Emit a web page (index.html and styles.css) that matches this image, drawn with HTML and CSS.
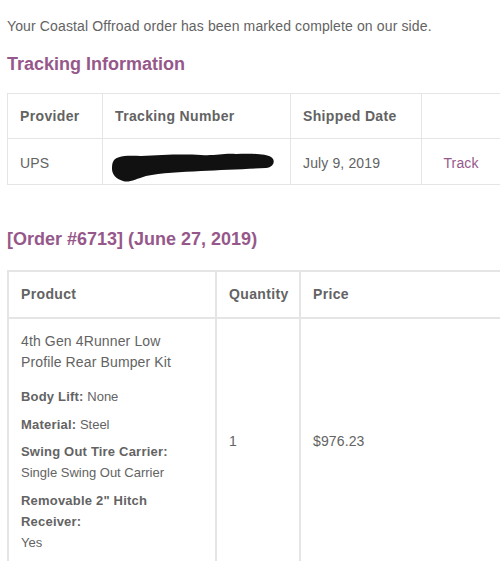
FILE: index.html
```html
<!DOCTYPE html>
<html>
<head>
<meta charset="utf-8">
<link rel="stylesheet" href="styles.css">
</head>
<body>
<div class="email">
  <p class="intro">Your Coastal Offroad order has been marked complete on our side.</p>

  <h2 class="heading">Tracking Information</h2>
  <table class="tracking">
    <thead>
      <tr>
        <th class="tc-provider">Provider</th>
        <th class="tc-number">Tracking Number</th>
        <th class="tc-date">Shipped Date</th>
        <th class="tc-action"></th>
      </tr>
    </thead>
    <tbody>
      <tr>
        <td>UPS</td>
        <td class="redacted-cell">
          <svg class="redaction" width="166" height="38" viewBox="0 0 166 38" aria-hidden="true">
            <path d="M2,16 C4,10 14,9 30,10 C50,9 70,8 90,9 C105,10 112,7 125,8 C140,7 155,8 160,11 C165,14 163,21 155,22 C135,23 110,24 90,25 C70,26 50,27 35,30 C25,33 18,37 12,35 C5,33 1,28 1,23 C1,20 1,18 2,16 Z" fill="#111111"/>
          </svg>
        </td>
        <td>July 9, 2019</td>
        <td class="action"><a class="link" href="#">Track</a></td>
      </tr>
    </tbody>
  </table>

  <h2 class="heading order-heading">[Order #6713] (June 27, 2019)</h2>
  <table class="order">
    <thead>
      <tr>
        <th class="oc-product">Product</th>
        <th class="oc-qty">Quantity</th>
        <th class="oc-price">Price</th>
      </tr>
    </thead>
    <tbody>
      <tr>
        <td class="product">
          <div class="product-name">4th Gen 4Runner Low Profile Rear Bumper Kit</div>
          <ul class="meta">
            <li><strong>Body Lift:</strong> None</li>
            <li><strong>Material:</strong> Steel</li>
            <li><strong class="label-block">Swing Out Tire Carrier:</strong>Single Swing Out Carrier</li>
            <li><strong class="label-block">Removable 2" Hitch Receiver:</strong>Yes</li>
          </ul>
        </td>
        <td class="middle">1</td>
        <td class="middle">$976.23</td>
      </tr>
    </tbody>
  </table>
</div>
</body>
</html>
```

FILE: styles.css
```css
html, body {
  margin: 0;
  padding: 0;
  background: #ffffff;
  overflow: hidden;
}

.email {
  padding: 16px 0 0 7px;
  font-family: "Liberation Sans", Arial, sans-serif;
  font-size: 14px;
  line-height: 21px;
  letter-spacing: 0.13px;
  color: #636363;
}

.intro {
  margin: 0 0 16px;
}

.heading {
  margin: 0 0 17px;
  font-size: 18px;
  line-height: 23px;
  font-weight: bold;
  letter-spacing: 0;
  color: #96588a;
}

.order-heading {
  margin: 43px 0 19px;
}

/* tracking table */
.tracking {
  width: 494px;
  table-layout: fixed;
  border-collapse: separate;
  border-spacing: 0;
  border-top: 1px solid #e5e5e5;
  border-left: 1px solid #e5e5e5;
}

.tracking th,
.tracking td {
  box-sizing: border-box;
  padding: 12px;
  border-right: 1px solid #e5e5e5;
  border-bottom: 1px solid #e5e5e5;
  text-align: left;
  vertical-align: middle;
  white-space: nowrap;
}

.tracking th {
  line-height: 20px;
  font-weight: bold;
  letter-spacing: 0.35px;
}

.tracking td {
  padding-top: 14px;
  padding-bottom: 10px;
}

.tc-provider { width: 95px; }
.tc-number { width: 188px; }
.tc-date { width: 131px; }
.tc-action { width: 79px; }

.tracking td.action {
  text-align: center;
  padding-left: 0;
  padding-right: 0;
}

.link {
  color: #96588a;
  text-decoration: none;
}

.redaction {
  display: block;
  margin: -7px 0 -10px -4px;
}

/* order table */
.order {
  width: 520px;
  table-layout: fixed;
  border-collapse: separate;
  border-spacing: 0;
  border: 1px solid #e5e5e5;
}

.order th,
.order td {
  box-sizing: border-box;
  padding: 12px;
  border: 1px solid #e5e5e5;
  text-align: left;
}

.order th {
  font-weight: bold;
  letter-spacing: 0.35px;
  vertical-align: middle;
}

.oc-product { width: 208px; }
.oc-qty { width: 84px; }
.oc-price { width: 228px; }

.order td.product {
  vertical-align: top;
}

.order td.middle {
  vertical-align: middle;
}

.product-name {
  max-width: 172px;
}

.meta {
  list-style: none;
  margin: 13px 0 0;
  padding: 0;
  font-size: 13px;
  letter-spacing: 0;
}

.meta li {
  margin-top: 6.5px;
}

.meta li:first-child {
  margin-top: 0;
}

.meta strong {
  font-weight: bold;
  letter-spacing: 0.2px;
}

.label-block {
  display: block;
}
```
